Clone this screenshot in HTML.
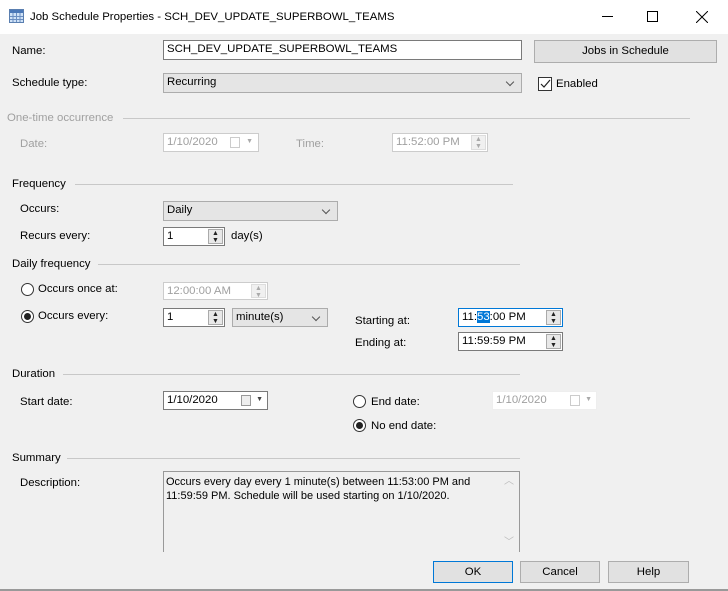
<!DOCTYPE html>
<html><head><style>
*{box-sizing:border-box}
body{margin:0;width:728px;height:591px;background:#f0f0f0;font-family:"Liberation Sans",sans-serif;font-size:11.4px;color:#000;position:relative;overflow:hidden}
.a{position:absolute;white-space:nowrap}
.t{line-height:14px}
.g{color:#a0a0a0}
.box{position:absolute;background:#fff;border:1px solid #7a7a7a;padding:2px 3px;line-height:13px}
.dis{border-color:#ccc;color:#a0a0a0;background:#fff}
.sel{position:absolute;background:#e5e5e5;border:1px solid #acacac;padding:2px 3px;line-height:13px}
.sel:after{content:"";position:absolute;right:8px;top:5px;width:5px;height:5px;border-right:1px solid #555;border-bottom:1px solid #555;transform:rotate(45deg)}
.btn{position:absolute;background:#e1e1e1;border:1px solid #adadad;text-align:center;line-height:19px}
.line{position:absolute;height:1px;background:#c8c8c8}
.spin{position:absolute;right:1px;top:1px;width:15px;bottom:1px;background:#e8e8e8;border:1px solid #aaa;font-size:7px;line-height:7px;text-align:center;color:#222}
.radio{position:absolute;width:13px;height:13px;border:1px solid #333;border-radius:50%;background:#fff}
.radio.on:after{content:"";position:absolute;left:2px;top:2px;width:7px;height:7px;border-radius:50%;background:#222}
</style></head><body>
<div class="a" style="left:0;top:0;width:728px;height:34px;background:#fff"></div>
<svg class="a" style="left:9px;top:9px" width="15" height="14"><rect x="0.5" y="0.5" width="14" height="13" fill="#cfe2f7" stroke="#5a7fb0"/><rect x="1" y="1" width="13" height="3" fill="#4a78b8"/><path d="M4 4V13M7.5 4V13M11 4V13M1 7.5H14M1 10.5H14" stroke="#6b8fc2" stroke-width="1"/></svg>
<div class="a" style="left:30px;top:9px;font-size:11.4px;line-height:16px">Job Schedule Properties - SCH_DEV_UPDATE_SUPERBOWL_TEAMS</div>
<div class="a" style="left:602px;top:16px;width:11px;height:1px;background:#000"></div>
<div class="a" style="left:647px;top:11px;width:11px;height:11px;border:1px solid #000"></div>
<svg class="a" style="left:696px;top:11px" width="12" height="12"><path d="M0 0L12 12M12 0L0 12" stroke="#000"/></svg>

<div class="a t" style="left:12px;top:44px">Name:</div>
<div class="box" style="left:163px;top:40px;width:359px;height:20px">SCH_DEV_UPDATE_SUPERBOWL_TEAMS</div>
<div class="btn" style="left:534px;top:40px;width:183px;height:23px;line-height:21px">Jobs in Schedule</div>
<div class="a t" style="left:12px;top:76px">Schedule type:</div>
<div class="sel" style="left:163px;top:73px;width:359px;height:20px">Recurring</div>
<div class="a" style="left:538px;top:77px;width:14px;height:14px;border:1px solid #333;background:#fff"></div>
<svg class="a" style="left:540px;top:79px" width="11" height="10"><path d="M1 5L4 8L10 1" stroke="#222" fill="none" stroke-width="1.2"/></svg>
<div class="a t" style="left:556px;top:77px">Enabled</div>

<div class="a t g" style="left:7px;top:111px">One-time occurrence</div>
<div class="line" style="left:123px;top:118px;width:567px"></div>
<div class="a t g" style="left:20px;top:137px">Date:</div>
<div class="box dis" style="left:163px;top:133px;width:96px;height:19px">1/10/2020<span style="position:absolute;right:18px;top:3px;width:10px;height:11px;border:1px solid #ccc"></span><span style="position:absolute;right:5px;top:1px;font-size:7px;color:#aaa">▼</span></div>
<div class="a t g" style="left:296px;top:137px">Time:</div>
<div class="box dis" style="left:392px;top:133px;width:96px;height:19px">11:52:00 PM<span class="spin" style="border-color:#ddd;color:#aaa;background:#f0f0f0">▲<br>▼</span></div>

<div class="a t" style="left:12px;top:177px">Frequency</div>
<div class="line" style="left:75px;top:184px;width:438px"></div>
<div class="a t" style="left:20px;top:202px">Occurs:</div>
<div class="sel" style="left:163px;top:201px;width:175px;height:20px">Daily</div>
<div class="a t" style="left:20px;top:229px">Recurs every:</div>
<div class="box" style="left:163px;top:227px;width:62px;height:19px">1<span class="spin">▲<br>▼</span></div>
<div class="a t" style="left:231px;top:229px">day(s)</div>

<div class="a t" style="left:12px;top:257px">Daily frequency</div>
<div class="line" style="left:98px;top:264px;width:422px"></div>
<div class="radio" style="left:21px;top:283px"></div>
<div class="a t" style="left:38px;top:282px">Occurs once at:</div>
<div class="box dis" style="left:163px;top:282px;width:105px;height:18px">12:00:00 AM<span class="spin" style="border-color:#ddd;color:#aaa;background:#f0f0f0">▲<br>▼</span></div>
<div class="radio on" style="left:21px;top:310px"></div>
<div class="a t" style="left:38px;top:309px">Occurs every:</div>
<div class="box" style="left:163px;top:308px;width:62px;height:19px">1<span class="spin">▲<br>▼</span></div>
<div class="sel" style="left:232px;top:308px;width:96px;height:19px">minute(s)</div>
<div class="a t" style="left:355px;top:314px">Starting at:</div>
<div class="box" style="left:458px;top:308px;width:105px;height:19px;border-color:#0078d7">11:<span style="background:#0078d7;color:#fff">53</span>:00 PM<span class="spin">▲<br>▼</span></div>
<div class="a t" style="left:355px;top:336px">Ending at:</div>
<div class="box" style="left:458px;top:332px;width:105px;height:19px">11:59:59 PM<span class="spin">▲<br>▼</span></div>

<div class="a t" style="left:12px;top:367px">Duration</div>
<div class="line" style="left:63px;top:374px;width:457px"></div>
<div class="a t" style="left:20px;top:395px">Start date:</div>
<div class="box" style="left:163px;top:391px;width:105px;height:19px">1/10/2020<span style="position:absolute;right:16px;top:3px;width:10px;height:11px;border:1px solid #999;background:#eee"></span><span style="position:absolute;right:4px;top:1px;font-size:7px;color:#444">▼</span></div>
<div class="radio" style="left:353px;top:395px"></div>
<div class="a t" style="left:371px;top:395px">End date:</div>
<div class="box dis" style="left:492px;top:391px;width:105px;height:19px;border-color:#eee">1/10/2020<span style="position:absolute;right:16px;top:3px;width:10px;height:11px;border:1px solid #ccc"></span><span style="position:absolute;right:4px;top:1px;font-size:7px;color:#aaa">▼</span></div>
<div class="radio on" style="left:353px;top:419px"></div>
<div class="a t" style="left:371px;top:419px">No end date:</div>

<div class="a t" style="left:12px;top:451px">Summary</div>
<div class="line" style="left:67px;top:458px;width:453px"></div>
<div class="a t" style="left:20px;top:476px">Description:</div>
<div class="a" style="left:163px;top:471px;width:357px;height:90px;border:1px solid #999;border-bottom:none;background:#f0f0f0;padding:3px 2px;line-height:14px;font-size:11px">Occurs every day every 1 minute(s) between 11:53:00 PM and<br>11:59:59 PM. Schedule will be used starting on 1/10/2020.<span style="position:absolute;right:5px;top:3px;color:#bbb;font-size:10px">︿</span><span style="position:absolute;right:5px;top:64px;color:#bbb;font-size:10px">﹀</span></div>
<div class="a" style="left:0;top:552px;width:728px;height:39px;background:#f0f0f0"></div>
<div class="btn" style="left:433px;top:561px;width:80px;height:22px;border:1px solid #0078d7;line-height:20px">OK</div>
<div class="btn" style="left:520px;top:561px;width:80px;height:22px;line-height:20px">Cancel</div>
<div class="btn" style="left:608px;top:561px;width:81px;height:22px;line-height:20px">Help</div>
<div class="a" style="left:0;top:589px;width:728px;height:2px;background:#999"></div>
</body></html>
